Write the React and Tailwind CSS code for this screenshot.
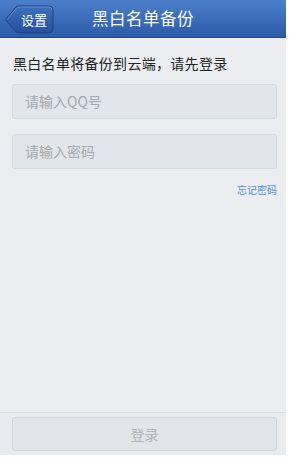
export default function App() {
    const font = { fontFamily: '"Noto Sans CJK SC", "Noto Sans", sans-serif' };
    return (
        <div className="w-[289px] h-[458px] bg-white" style={font}>
            <div className="w-[286px] h-[455px] bg-[#ebedf0] flex flex-col">
                <div className="relative h-[38px] flex items-center justify-center bg-gradient-to-b from-[#4c7fcb] to-[#2d5ba8] border-b border-[#24498a]">
                    <div className="absolute left-[4px] top-[5px] w-[50px] h-[29px]">
                        <svg width="50" height="29" viewBox="0 0 50 29" className="absolute inset-0">
                            <defs>
                                <linearGradient id="bb" x1="0" y1="0" x2="0" y2="1">
                                    <stop offset="0" stopColor="#3f6fbd" />
                                    <stop offset="1" stopColor="#24509c" />
                                </linearGradient>
                            </defs>
                            <path d="M1.5 14.5 L12 2 Q13 1 15 1 L45 1 Q49 1 49 5 L49 24 Q49 28 45 28 L15 28 Q13 28 12 27 Z" fill="url(#bb)" stroke="#1d4180" strokeWidth="1" />
                            <path d="M3 14.5 L12.5 3 Q13.5 2 15 2 L45 2 Q48 2 48 5" fill="none" stroke="#7ea2dc" strokeOpacity="0.6" strokeWidth="1" />
                        </svg>
                        <span className="absolute left-[13px] top-0 h-[29px] w-[34px] flex items-center justify-center text-white text-[13px] leading-none">设置</span>
                    </div>
                    <span className="text-white text-[16.5px] leading-none tracking-[0.5px]">黑白名单备份</span>
                </div>
                <div className="flex-1 flex flex-col pl-[12px] pr-[9px]">
                    <div className="mt-[16px] text-[14px] leading-[18px] text-[#222] pl-[1px] tracking-[0.3px]">黑白名单将备份到云端，请先登录</div>
                    <div className="mt-[12px] h-[35px] rounded-[3px] bg-[#e2e5e9] border border-[#d6dade] flex items-center pl-[12px] text-[14px] text-[#a3a8ae]">请输入QQ号</div>
                    <div className="mt-[15px] h-[35px] rounded-[3px] bg-[#e2e5e9] border border-[#d6dade] flex items-center pl-[12px] text-[14px] text-[#a3a8ae]">请输入密码</div>
                    <div className="mt-[14px] flex justify-end text-[10px] leading-[14px] text-[#4f8fd0]">忘记密码</div>
                </div>
                <div className="h-[43px] border-t border-[#dadde1] bg-[#e9ebee] pl-[12px] pr-[9px] pt-[4px]">
                    <div className="h-[34px] rounded-[3px] bg-[#e1e4e8] border border-[#d3d7dc] flex items-center justify-center text-[14px] text-[#b0b4ba]">登录</div>
                </div>
            </div>
        </div>
    );
}
